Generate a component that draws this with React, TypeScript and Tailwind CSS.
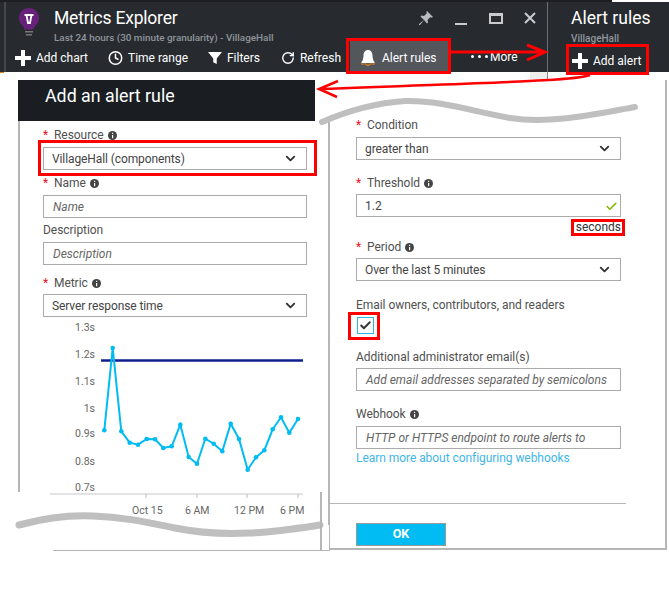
import { ChevronDown, Check, Clock, RotateCw } from "lucide-react";

const points = [
  [104.3, 430.3], [112.7, 348], [121.3, 431.3], [129.7, 442.7], [138, 444.7], [146.7, 439],
  [155, 439.3], [163.3, 448], [171.7, 446.3], [180.3, 424.7], [188.7, 457], [197, 463.7],
  [205.3, 438.7], [213.7, 443.7], [222.3, 451.3], [230.7, 423.7], [239, 439], [247.7, 469.7],
  [256, 457.3], [264.3, 450.3], [272.7, 429.3], [281, 417.3], [289.3, 432.7], [298, 419],
];

const yLabels = [
  ["1.3s", 331], ["1.2s", 358], ["1.1s", 385], ["1s", 412], ["0.9s", 437], ["0.8s", 465], ["0.7s", 491],
] as const;
const xLabels = [
  ["Oct 15", 132], ["6 AM", 185], ["12 PM", 234], ["6 PM", 280],
] as const;
const redBoxes = [
  [347.5, 39.5, 102, 33],
  [567.5, 45.5, 80, 28],
  [39.5, 141.5, 276, 33],
  [572.5, 220.5, 51, 14],
  [349.5, 313.5, 29, 25],
];

function Plus() {
  return (
    <svg width="16" height="16" viewBox="0 0 16 16" className="shrink-0">
      <path d="M6 0h4v6h6v4h-6v6H6v-6H0V6h6z" fill="#fff" />
    </svg>
  );
}

function Info() {
  return (
    <svg width="9" height="9" viewBox="0 0 9 9" className="shrink-0">
      <circle cx="4.5" cy="4.5" r="4.5" fill="#444" />
      <rect x="4" y="4" width="1.2" height="3.2" fill="#fff" />
      <rect x="4" y="1.8" width="1.2" height="1.2" fill="#fff" />
    </svg>
  );
}

function Label({ text, required, info }: { text: string; required?: boolean; info?: boolean }) {
  return (
    <div className="flex h-[16px] items-center text-[12px] tracking-[-0.05px] text-[#505050]">
      {required && <span className="w-[11px] text-[#e81123]">*</span>}
      <span>{text}</span>
      {info && <span className="ml-[4px] flex"><Info /></span>}
    </div>
  );
}

function SelectBox({ value }: { value: string }) {
  return (
    <div className="flex h-[23px] items-center justify-between border border-[#ababab] pl-[8px] pr-[8px] text-[12px] tracking-[-0.1px] text-[#444]">
      <span>{value}</span>
      <ChevronDown size={15} strokeWidth={3} className="text-[#333]" />
    </div>
  );
}

function TextBox({ placeholder }: { placeholder: string }) {
  return (
    <div className="flex h-[23px] items-center border border-[#ababab] pl-[9px] text-[12px] italic text-[#666]">
      {placeholder}
    </div>
  );
}

function ToolItem({ icon, text, className }: { icon: React.ReactNode; text: string; className: string }) {
  return (
    <div className={`flex shrink-0 items-center gap-[5px] whitespace-nowrap pt-[3px] text-[12px] text-white ${className}`}>
      {icon}
      <span>{text}</span>
    </div>
  );
}

export default function App() {
  const line = points.map((p) => p.join(",")).join(" ");

  return (
    <div className="relative h-[593px] w-[669px] overflow-hidden bg-white font-['Roboto','Liberation_Sans',sans-serif]">
      {/* portal header, two blades side by side */}
      <div className="flex h-[72px] border-t-2 border-[#1c1e21] bg-[#272b30] text-white">
        <div className="w-[547px] shrink-0">
          <div className="flex h-[39px] items-start">
            <svg width="20" height="30" viewBox="0 0 20 30" className="ml-[19px] mt-[6px] shrink-0">
              <path d="M10 0a10 10 0 0 1 6 18l-1.500 3.500h-9L4 18A10 10 0 0 1 10 0z" fill="#68217a" />
              <path d="M5.500 7h9M7.500 7l1.500 8h2l1.500-8" stroke="#fff" strokeWidth="1.800" fill="none" />
              <rect x="6" y="23" width="8" height="1.500" fill="#777" />
              <rect x="7" y="26" width="6" height="1.500" fill="#777" />
            </svg>
            <div className="ml-[15px]">
              <div className="mt-[4px] h-[25px] text-[17.5px] leading-[25px] tracking-[-0.2px]">Metrics Explorer</div>
              <div className="text-[9.900px] font-medium leading-[13px] text-[#8f959b]">
                Last 24 hours (30 minute granularity) - VillageHall
              </div>
            </div>
            <div className="ml-auto flex items-center pt-[9px]">
              <svg width="14" height="14" viewBox="0 0 14 14" className="mr-[22px]">
                <path d="M8 0l6 6-1.500.8-1-.8-3 3 .5 2.500-1 1L5 9l-4 5-1 0 0-1 5-4L1.500 5.500l1-1L5 5l3-3-.8-1z" fill="#b9bcbf" />
              </svg>
              <div className="mr-[22px] mt-[12px] h-[2px] w-[12px] bg-[#c9cbcd]" />
              <div className="mr-[21px] h-[11px] w-[14px] border-2 border-t-[3px] border-[#c9cbcd]" />
              <svg width="12" height="12" viewBox="0 0 12 12" className="mr-[11px]">
                <path d="M1 1l10 10M11 1L1 11" stroke="#c9cbcd" strokeWidth="2" />
              </svg>
            </div>
          </div>
          <div className="flex h-[31px] items-stretch">
            <ToolItem className="ml-[15px] w-[73px]" text="Add chart" icon={<Plus />} />
            <ToolItem className="ml-[20px] w-[80px]" text="Time range" icon={<Clock size={16} strokeWidth={2.4} />} />
            <ToolItem
              className="ml-[20px] w-[52px]"
              text="Filters"
              icon={
                <svg width="16" height="16" viewBox="0 0 16 16">
                  <path d="M0 1h16L10 8.500V15l-4-2V8.500z" fill="#fff" />
                </svg>
              }
            />
            <ToolItem className="ml-[21px] w-[60px]" text="Refresh" icon={<RotateCw size={16} strokeWidth={2.4} />} />
            <ToolItem
              className="ml-[9px] w-[98px] bg-[#53575c] pl-[11px] !gap-[7px]"
              text="Alert rules"
              icon={
                <svg width="14" height="16" viewBox="0 0 14 16">
                  <path d="M7 0c3 0 4.500 2.500 4.500 5.500 0 3.500 1 5.500 2.500 7.500H0c1.500-2 2.500-4 2.500-7.500C2.500 2.500 4 0 7 0z" fill="#fff" />
                  <path d="M0 14h5l2 2 2-2h5" stroke="#e8801a" strokeWidth="1.200" fill="none" />
                </svg>
              }
            />
            <div className="ml-[23px] flex items-center gap-[2px] text-[12px]">
              <span className="flex gap-[4px]">
                <span className="size-[3px] rounded-full bg-white" />
                <span className="size-[3px] rounded-full bg-white" />
                <span className="size-[3px] rounded-full bg-white" />
              </span>
              <span>More</span>
            </div>
          </div>
        </div>
        <div className="flex-1 border-l border-[#6b6e72] pl-[23px]">
          <div className="mt-[4px] h-[25px] text-[17.5px] leading-[25px]">Alert rules</div>
          <div className="mt-[1px] text-[10px] font-medium leading-[13px] text-[#8f959b]">VillageHall</div>
          <ToolItem className="ml-[1px] mt-[4px]" text="Add alert" icon={<Plus />} />
        </div>
      </div>

      {/* the two halves of the blade */}
      <div className="ml-[18px] mt-[8px] flex h-[470px]">
        <div className="w-[312px] shrink-0">
          <div className="flex h-[41px] w-[297px] items-center bg-[#1a1e22] pb-[8px] pl-[27px] text-[17.8px] text-white">
            Add an alert rule
          </div>
          <div className="h-[429px] border-x-2 border-[#b5b5b5] pl-[23px] pr-[21px] pt-[6px]">
            <Label text="Resource" required info />
            <div className="mt-[4px]"><SelectBox value="VillageHall (components)" /></div>
            <div className="mt-[5px]"><Label text="Name" required info /></div>
            <div className="mt-[4px]"><TextBox placeholder="Name" /></div>
            <div className="mt-[4px]"><Label text="Description" /></div>
            <div className="mt-[4px]"><TextBox placeholder="Description" /></div>
            <div className="mt-[10px]"><Label text="Metric" required info /></div>
            <div className="mt-[3px]"><SelectBox value="Server response time" /></div>
          </div>
        </div>
        <div className="h-[470px] w-[337px] border-b-2 border-r-2 border-[#b5b5b5]">
          <div className="pl-[26px] pr-[44px] pt-[37px]">
            <Label text="Condition" required />
            <div className="mt-[4px]"><SelectBox value="greater than" /></div>
            <div className="mt-[15px]"><Label text="Threshold" required info /></div>
            <div className="relative mt-[3px]">
              <div className="flex h-[23px] items-center border border-[#ababab] pl-[8px] text-[12px] text-[#444]">1.2</div>
              <Check size={13} strokeWidth={3} className="absolute right-[3px] top-[6px] text-[#7fba00]" />
            </div>
            <div className="mt-[2px] text-right text-[12px] leading-[16px] text-[#333]">seconds</div>
            <div className="mt-[4px]"><Label text="Period" required info /></div>
            <div className="mt-[3px]"><SelectBox value="Over the last 5 minutes" /></div>
            <div className="mt-[16px]"><Label text="Email owners, contributors, and readers" /></div>
            <div className="ml-[1px] mt-[4px] flex size-[17px] items-center justify-center border border-[#2ab3e6]">
              <Check size={13} strokeWidth={3.5} className="text-[#333]" />
            </div>
            <div className="mt-[15px]"><Label text="Additional administrator email(s)" /></div>
            <div className="mt-[3px]"><TextBox placeholder="Add email addresses separated by semicolons" /></div>
            <div className="mt-[15px]"><Label text="Webhook" info /></div>
            <div className="mt-[4px]"><TextBox placeholder="HTTP or HTTPS endpoint to route alerts to" /></div>
            <div className="mt-[1px] text-[12px] leading-[17px] tracking-[-0.05px] text-[#3fb6e8]">Learn more about configuring webhooks</div>
          </div>
          <div className="mr-[39px] mt-[36px] border-t border-[#b5b5b5]" />
          <div className="ml-[26px] mt-[19px] flex h-[23px] w-[90px] items-center justify-center border border-[#9a9a9a] bg-[#00bcf2] text-[12.5px] font-bold text-white">
            OK
          </div>
        </div>
      </div>

      {/* chart, torn-edge waves and red callouts drawn over the screenshot */}
      <svg width="669" height="593" viewBox="0 0 669 593" className="absolute left-0 top-0">
        <rect x="612" y="0" width="57" height="2" fill="#fff" />
        <rect x="4" y="2" width="2" height="70" fill="#44484d" />
        <rect x="0" y="72" width="4" height="1" fill="#e8801a" />
        <rect x="530" y="72" width="17" height="7" fill="#eee" />
        <line x1="547.500" y1="72" x2="547.500" y2="79" stroke="#888" />
        {yLabels.map(([t, y]) => (
          <text key={t} x="95" y={y} textAnchor="end" fontSize="10.500" fill="#666">{t}</text>
        ))}
        {xLabels.map(([t, x]) => (
          <text key={t} x={x} y="514" fontSize="10.500" fill="#666">{t}</text>
        ))}
        <line x1="50" y1="494" x2="303" y2="494" stroke="#e3e3e3" strokeWidth="2" />
        {[146, 197, 247, 298].map((x) => (
          <line key={x} x1={x} y1="494" x2={x} y2="498" stroke="#bbb" />
        ))}
        <line x1="101" y1="360.500" x2="303" y2="360.500" stroke="#0f1f8f" strokeWidth="2.500" />
        <polyline points={line} fill="none" stroke="#00bcf2" strokeWidth="2" />
        {points.map(([x, y]) => (
          <circle key={x} cx={x} cy={y} r="2.300" fill="#00bcf2" />
        ))}

        <rect x="15" y="492" width="8" height="60" fill="#fff" />
        <path d="M15 525C45 518 70 515 93 516C125 517 150 523 175 528C205 534 230 534 250 533C275 532 300 528 329 525V552H15z" fill="#fff" />
        <path d="M19 525C45 518 70 515 93 516C125 517 150 523 175 528C205 534 230 534 250 533C275 532 300 528 320 525" fill="none" stroke="#bfbfbf" strokeWidth="7" strokeLinecap="round" />
        <line x1="321" y1="492" x2="321" y2="550" stroke="#b5b5b5" strokeWidth="2" />
        <line x1="53" y1="550.500" x2="330" y2="550.500" stroke="#b5b5b5" />

        <path d="M322 122C345 112 375 103 405 101C440 100 475 112 510 118C550 124 590 115 635 107" fill="none" stroke="#bfbfbf" strokeWidth="6" strokeLinecap="round" />

        {redBoxes.map(([x, y, w, h]) => (
          <rect key={x} x={x} y={y} width={w} height={h} fill="none" stroke="#f00" strokeWidth="3" />
        ))}
        <path d="M451 52H545M527 45L545 52L527 60" fill="none" stroke="#f00" strokeWidth="3" />
        <path d="M590 75C575 81 500 82 320 89M338 81L319 89L337 97" fill="none" stroke="#f00" strokeWidth="2.500" />
      </svg>
    </div>
  );
}
